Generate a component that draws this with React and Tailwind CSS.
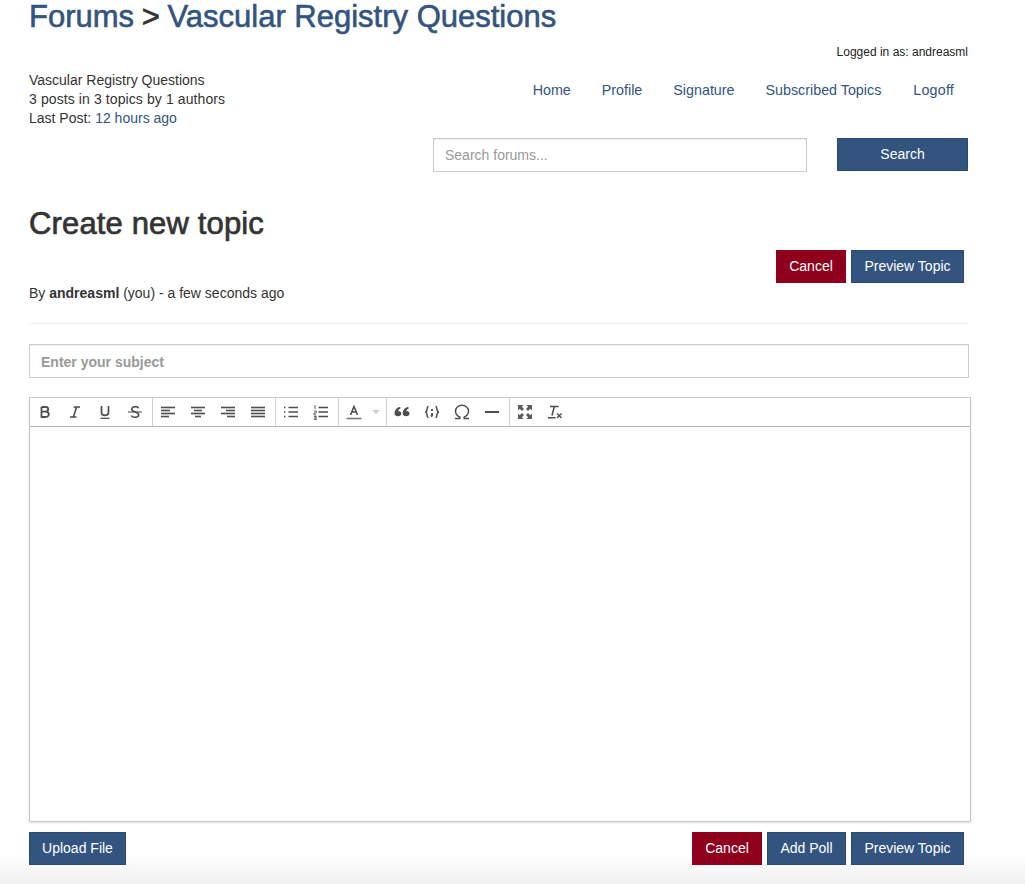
import React from "react";

const Ico = ({ children, w = 16, h = 16 }) => (
  <svg width={w} height={h} viewBox={`0 0 ${w} ${h}`} fill="none" stroke="#4d4d4d" strokeWidth="1.3" strokeLinecap="butt">
    {children}
  </svg>
);

const lines = (rows) =>
  rows.map(([a, b, y], i) => <path key={i} d={`M${a} ${y}H${b}`} strokeWidth="1.6" />);

const icons = {
  bold: <Ico><path d="M4.5 3H8.7C12 3 12 7.6 8.7 7.6H4.5M8.7 7.6C12.8 7.6 12.8 13 8.7 13H4.5V3" strokeWidth="1.8" /></Ico>,
  italic: <Ico><path d="M6.5 3H13M9.7 3L6.3 13M3 13H9.5" strokeWidth="1.6" /></Ico>,
  underline: <Ico><path d="M4.5 2V8.5C4.5 12.4 11.5 12.4 11.5 8.5V2" strokeWidth="1.7" /><path d="M3.5 14.3H12.5" strokeWidth="1.3" /></Ico>,
  strike: <Ico><path d="M11.5 4.2C10.5 1.9 4.8 2.1 4.8 5.2C4.8 8.4 11.7 7.5 11.7 10.8C11.7 13.9 5.5 14 4.2 11.5" strokeWidth="1.6" /><path d="M1 8H15" strokeWidth="1.1" /></Ico>,
  left: <Ico>{lines([[1, 15, 3.5], [1, 10, 6.5], [1, 15, 9.5], [1, 9, 12.5]])}</Ico>,
  center: <Ico>{lines([[1, 15, 3.5], [4, 12, 6.5], [1, 15, 9.5], [5, 11, 12.5]])}</Ico>,
  right: <Ico>{lines([[1, 15, 3.5], [6, 15, 6.5], [1, 15, 9.5], [7, 15, 12.5]])}</Ico>,
  justify: <Ico>{lines([[1, 15, 3.5], [1, 15, 6.5], [1, 15, 9.5], [1, 15, 12.5]])}</Ico>,
  bullets: <Ico><path d="M1 3.5H3M1 8H3M1 12.5H3" strokeWidth="1.5" strokeDasharray="1.2 0.6" /><path d="M5.5 3.5H15M5.5 8H15M5.5 12.5H15" strokeWidth="1.6" /></Ico>,
  numbers: <Ico><path d="M2 1V5M1 7H3.2V9H1V11H3.2M1 12.5H3.2V15.5H1M1 14H3" strokeWidth="0.9" /><path d="M5.5 3.5H15M5.5 8H15M5.5 12.5H15" strokeWidth="1.6" /></Ico>,
  color: <Ico><path d="M4.5 11L8 2.5L11.5 11M5.8 8H10.2" strokeWidth="1.6" /><path d="M0.5 14.5H15.5" stroke="#777" strokeWidth="1.6" /></Ico>,
  quote: <Ico><path fill="#4d4d4d" stroke="none" d="M0.5 9.5C0.5 6.5 2.5 3.5 6 3L6.7 4.2C5 5 4.3 6 4.2 7C6.2 7 7.3 8 7.3 9.5C7.3 11.2 6 12.3 4 12.3C2 12.3 0.5 11.2 0.5 9.5ZM8.7 9.5C8.7 6.5 10.7 3.5 14.2 3L14.9 4.2C13.2 5 12.5 6 12.4 7C14.4 7 15.5 8 15.5 9.5C15.5 11.2 14.2 12.3 12.2 12.3C10.2 12.3 8.7 11.2 8.7 9.5Z" /></Ico>,
  code: <Ico><path d="M4.5 2.5C2.5 2.5 3.5 6.5 2.5 7C2.2 7.5 1.5 8 1 8C1.5 8 2.2 8.5 2.5 9C3.5 9.5 2.5 13.5 4.5 13.5M11.5 2.5C13.5 2.5 12.5 6.5 13.5 7C13.8 7.5 14.5 8 15 8C14.5 8 13.8 8.5 13.5 9C12.5 9.5 13.5 13.5 11.5 13.5" strokeWidth="1.5" /><path d="M8 5V7M8 9V11.5L7 12.5" strokeWidth="1.9" /></Ico>,
  omega: <Ico><path d="M1 14.5H5.8V13C3.2 11.9 1.5 9.7 1.5 7.2C1.5 3.7 4.4 1.3 8 1.3C11.6 1.3 14.5 3.7 14.5 7.2C14.5 9.7 12.8 11.9 10.2 13V14.5H15" strokeWidth="1.5" /></Ico>,
  hr: <Ico><path d="M1 8H15" strokeWidth="2" /></Ico>,
  full: <Ico><path d="M1 1H6.5L4.8 2.7L7 5L5 7L2.7 4.8L1 6.5ZM15 1H9.5L11.2 2.7L9 5L11 7L13.3 4.8L15 6.5ZM1 15H6.5L4.8 13.3L7 11L5 9L2.7 11.2L1 9.5ZM15 15H9.5L11.2 13.3L9 11L11 9L13.3 11.2L15 9.5Z" fill="#5a5a5a" stroke="none" /></Ico>,
  clear: <Ico><path d="M3 2.5H11.5M7.3 2.5L5 11.5M1 13.8H8.5" strokeWidth="1.5" /><path d="M10 9.5L14.5 14M14.5 9.5L10 14" strokeWidth="1.4" /></Ico>,
};

const Tool = ({ name }) => (
  <span className="flex w-[30px] h-full items-center justify-center">{icons[name]}</span>
);

const Sep = () => <span className="h-full w-px bg-[#d1d1d1] ml-[2px]" />;

const Btn = ({ red, className = "", children }) => (
  <button
    className={`h-[33px] pb-[2px] text-center text-[14px] leading-none text-white border ${red ? "w-[70px] bg-[#8f001c] border-[#8f001c]" : "bg-[#32547f] border-[#2a4a72]"} ${className}`}
  >
    {children}
  </button>
);

export default function App() {
  return (
    <div className="relative h-[884px] overflow-hidden bg-white pl-[29px] pr-[57px] text-[14px] leading-[19px] text-[#333] font-['Liberation_Sans',Arial,sans-serif]">
      <div className="absolute inset-x-0 bottom-0 h-[30px] bg-gradient-to-b from-white to-[#f0f0f0]" />
      <div className="relative">
        <h1 className="h-[42px] text-[31px] leading-[33px] font-normal text-[#32547f] [-webkit-text-stroke:0.6px_#32547f]">
          Forums <span className="-mx-[1px] text-[#333] [-webkit-text-stroke:0.6px_#333]">&gt;</span> Vascular Registry Questions
        </h1>
        <div className="text-right text-[12px] leading-[20px] text-[#222]">Logged in as: andreasml</div>
        <div className="flex justify-between mt-[9px]">
          <div>
            <div>Vascular Registry Questions</div>
            <div className="tracking-[0.1px]">3 posts in 3 topics by 1 authors</div>
            <div>Last Post: <span className="text-[#32547f]">12 hours ago</span></div>
          </div>
          <nav className="flex gap-[31px] pr-[14px] pt-[10px] text-[14.3px] text-[#32547f]">
            <span>Home</span>
            <span>Profile</span>
            <span>Signature</span>
            <span>Subscribed Topics</span>
            <span className="ml-[1px] tracking-[0.2px]">Logoff</span>
          </nav>
        </div>
        <div className="mt-[10px] flex justify-end gap-[30px]">
          <div className="flex h-[34px] w-[374px] items-center border border-[#ccc] px-[11px] text-[#999] shadow-[inset_0_1px_1px_rgba(0,0,0,0.075)]">Search forums...</div>
          <Btn className="w-[131px]">Search</Btn>
        </div>
        <h2 className="mt-[34px] text-[31px] leading-[36px] tracking-[0.15px] font-normal text-[#333] [-webkit-text-stroke:0.7px_#333]">Create new topic</h2>
        <div className="mt-[8px] flex justify-end gap-[5px] pr-[4px]">
          <Btn red>Cancel</Btn>
          <Btn className="w-[113px]">Preview Topic</Btn>
        </div>
        <div className="mt-[1px]">By <b>andreasml</b> (you) - a few seconds ago</div>
        <div className="mt-[20px] border-t border-[#eee]" />
        <div className="mt-[20px] flex h-[34px] w-[940px] items-center border border-[#ccc] px-[11px] pt-[2px] font-bold text-[#999] shadow-[inset_0_1px_1px_rgba(0,0,0,0.075)]">Enter your subject</div>
        <div className="mt-[19px] w-[942px] border border-[#c8c8c8] shadow-[0_1px_2px_rgba(0,0,0,0.12)]">
          <div className="flex h-[29px] items-center border-b border-[#b5b5b5]">
            <Tool name="bold" /><Tool name="italic" /><Tool name="underline" /><Tool name="strike" /><Sep />
            <Tool name="left" /><Tool name="center" /><Tool name="right" /><Tool name="justify" /><Sep />
            <Tool name="bullets" /><Tool name="numbers" /><Sep />
            <span className="flex h-full w-[45px] items-center pl-[7px]">
              {icons.color}
              <span className="ml-[10px] h-0 w-0 border-x-[4px] border-t-[4px] border-x-transparent border-t-[#ccc]" />
            </span>
            <Sep />
            <Tool name="quote" /><Tool name="code" /><Tool name="omega" /><Tool name="hr" /><Sep />
            <Tool name="full" /><Tool name="clear" />
          </div>
          <div className="h-[394px]" />
        </div>
        <div className="mt-[10px] flex w-[935px] justify-between">
          <Btn className="w-[97px]">Upload File</Btn>
          <div className="flex gap-[5px]">
            <Btn red>Cancel</Btn>
            <Btn className="w-[79px]">Add Poll</Btn>
            <Btn className="w-[113px]">Preview Topic</Btn>
          </div>
        </div>
      </div>
    </div>
  );
}
